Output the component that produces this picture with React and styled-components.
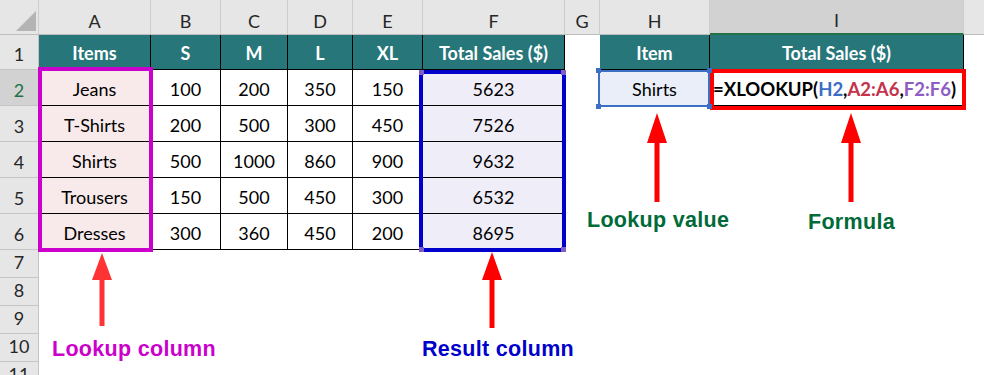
import React from "react";
import styled, { createGlobalStyle } from "styled-components";

const GlobalStyle = createGlobalStyle`
  html, body {
    margin: 0;
    padding: 0;
    background: #fff;
  }
  body {
    font-family: Lato, "Liberation Sans", sans-serif;
    overflow: hidden;
  }
  * {
    box-sizing: border-box;
  }
`;

const letters = ["A", "B", "C", "D", "E", "F", "G", "H", "I"];

const table = [
  ["Items", "S", "M", "L", "XL", "Total Sales ($)"],
  ["Jeans", 100, 200, 350, 150, 5623],
  ["T-Shirts", 200, 500, 300, 450, 7526],
  ["Shirts", 500, 1000, 860, 900, 9632],
  ["Trousers", 150, 500, 450, 300, 6532],
  ["Dresses", 300, 360, 450, 200, 8695],
];

const Sheet = styled.div`
  position: relative;
  display: grid;
  grid-template-columns: 39px 112px 70px 67px 65px 70px 142px 35px 110px 254px 1fr;
  grid-template-rows: 35px 35px repeat(5, 36px) repeat(5, 28px);
  width: 984px;
  height: 375px;
  overflow: hidden;
  background: #fff;
  font-family: Lato, "Liberation Sans", sans-serif;
`;

const Corner = styled.div`
  grid-row: 1;
  grid-column: 1;
  position: relative;
  background: #e6e6e6;
  border-right: 1px solid #cdcdcd;
  border-bottom: 1px solid #bdbdbd;
  &::after {
    content: "";
    position: absolute;
    left: 16px;
    top: 11px;
    width: 20px;
    height: 20px;
    background: #b4b4b4;
    clip-path: polygon(100% 0, 100% 100%, 0 100%);
  }
`;

const ColHead = styled.div`
  grid-row: 1;
  grid-column: ${(p) => p.$c};
  display: flex;
  align-items: center;
  justify-content: center;
  padding-top: 7px;
  font-size: 18px;
  color: #262626;
  background: ${(p) => (p.$active ? "#d2d2d2" : "#e6e6e6")};
  border-right: 1px solid #cdcdcd;
  border-bottom: ${(p) => (p.$active ? "2px solid #217346" : "1px solid #bdbdbd")};
`;

const HeadFiller = styled.div`
  grid-row: 1;
  grid-column: 11;
  background: #e6e6e6;
  border-bottom: 1px solid #bdbdbd;
`;

const RowHead = styled.div`
  grid-row: ${(p) => p.$r};
  grid-column: 1;
  display: flex;
  align-items: flex-end;
  justify-content: center;
  padding-bottom: 4px;
  font-size: 18px;
  color: ${(p) => (p.$active ? "#217346" : "#262626")};
  background: ${(p) => (p.$active ? "#d2d2d2" : "#e6e6e6")};
  border-right: 1px solid #c4c4c4;
  border-bottom: 1px solid #c4c4c4;
`;

const Cell = styled.div`
  grid-row: ${(p) => p.$r};
  grid-column: ${(p) => p.$c};
  display: flex;
  align-items: center;
  justify-content: ${(p) => (p.$left ? "flex-start" : "center")};
  padding: 2px 0 0 ${(p) => (p.$left ? "3px" : "0")};
  font-size: ${(p) => (p.$left ? "18.5px" : "18px")};
  font-weight: ${(p) => (p.$bold ? 700 : 400)};
  color: ${(p) => p.$fg || "#000"};
  background: ${(p) => p.$bg || "#fff"};
  border-right: 1px solid #000;
  border-bottom: 1px solid #000;
  white-space: nowrap;
`;

const Ref = styled.span`
  color: ${(p) => p.$fg};
`;

const RangeBox = styled.div`
  grid-row: ${(p) => p.$r};
  grid-column: ${(p) => p.$c};
  position: relative;
  margin: ${(p) => p.$m};
  border: ${(p) => p.$w}px solid ${(p) => p.$color};
  pointer-events: none;
  z-index: 2;
`;

const Handle = styled.span`
  position: absolute;
  width: 5px;
  height: 5px;
  background: ${(p) => p.$color};
  ${(p) => (p.$top ? "top: -4px;" : "bottom: -4px;")}
  ${(p) => (p.$leftSide ? "left: -4px;" : "right: -4px;")}
`;

const ArrowSvg = styled.svg`
  position: absolute;
  left: ${(p) => p.$x - 11}px;
  top: ${(p) => p.$tip}px;
  z-index: 3;
`;

const Note = styled.div`
  position: absolute;
  left: ${(p) => p.$x}px;
  top: ${(p) => p.$y}px;
  font-family: "Liberation Sans", Arial, sans-serif;
  font-weight: 700;
  font-size: 21.5px;
  letter-spacing: 0.3px;
  line-height: 1;
  color: ${(p) => p.$color};
  white-space: nowrap;
  z-index: 3;
`;

function Arrow({ x, tip, base, end, color }) {
  const h = end - tip;
  const head = base - tip;
  return (
    <ArrowSvg $x={x} $tip={tip} width="22" height={h} viewBox={`0 0 22 ${h}`}>
      <polygon points={`11,0 21,${head} 1,${head}`} fill={color} />
      <rect x="8.5" y={head - 1} width="5" height={h - head + 1} fill={color} />
    </ArrowSvg>
  );
}

function Corners({ color }) {
  return (
    <>
      <Handle $color={color} $top $leftSide />
      <Handle $color={color} $top />
      <Handle $color={color} $leftSide />
      <Handle $color={color} />
    </>
  );
}

export default function App() {
  const rows = [];
  for (let i = 1; i <= 11; i++) {
    rows.push(
      <RowHead key={"r" + i} $r={i + 1} $active={i === 2}>
        {i}
      </RowHead>
    );
  }

  const cells = [];
  table.forEach((row, ri) => {
    row.forEach((val, ci) => {
      const head = ri === 0;
      let bg = "#fff";
      if (head) bg = "#26767a";
      else if (ci === 0) bg = "#f8e9ea";
      else if (ci === 5) bg = "#efedf8";
      cells.push(
        <Cell
          key={ri + "-" + ci}
          $r={ri + 2}
          $c={ci + 2}
          $bg={bg}
          $bold={head}
          $fg={head ? "#fff" : "#000"}
        >
          {val}
        </Cell>
      );
    });
  });

  return (
    <>
      <GlobalStyle />
      <Sheet>
        <Corner />
        {letters.map((l, i) => (
          <ColHead key={l} $c={i + 2} $active={l === "I"}>
            {l}
          </ColHead>
        ))}
        <HeadFiller />
        {rows}
        {cells}

        <Cell $r={2} $c={9} $bg="#26767a" $fg="#fff" $bold>
          Item
        </Cell>
        <Cell $r={2} $c={10} $bg="#26767a" $fg="#fff" $bold>
          Total Sales ($)
        </Cell>
        <Cell $r={3} $c={9} $bg="#e9eef8">
          Shirts
        </Cell>
        <Cell $r={3} $c={10} $left $bold>
          =XLOOKUP(<Ref $fg="#3b6cc6">H2</Ref>,<Ref $fg="#c3334a">A2:A6</Ref>,
          <Ref $fg="#8d5cc4">F2:F6</Ref>)
        </Cell>

        <RangeBox $r="3 / 8" $c="2 / 3" $m="-3px -2px -2px -1px" $w={4} $color="#cc00cc" />
        <RangeBox $r="3 / 8" $c="7 / 8" $m="0 -1px -2px -4px" $w={4} $color="#0000cc">
          <Corners color="#7f5fc4" />
        </RangeBox>
        <RangeBox $r="3 / 4" $c="10 / 11" $m="-1px -2px -4px 0" $w={4} $color="#ff0000" />
        <RangeBox $r="3 / 4" $c="9 / 10" $m="0 0 -1px -2px" $w={2} $color="#3b6fc6">
          <Corners color="#3b6fc6" />
        </RangeBox>

        <Arrow x={102} tip={253} base={280} end={326} color="#ff3333" />
        <Arrow x={492} tip={252} base={280} end={328} color="#ff0000" />
        <Arrow x={657} tip={113} base={143} end={202} color="#ff0000" />
        <Arrow x={851} tip={113} base={143} end={202} color="#ff0000" />

        <Note $x={52} $y={339} $color="#cc00cc">
          Lookup column
        </Note>
        <Note $x={422} $y={339} $color="#0000cc">
          Result column
        </Note>
        <Note $x={587} $y={210} $color="#006b38">
          Lookup value
        </Note>
        <Note $x={808} $y={212} $color="#006b38">
          Formula
        </Note>
      </Sheet>
    </>
  );
}
